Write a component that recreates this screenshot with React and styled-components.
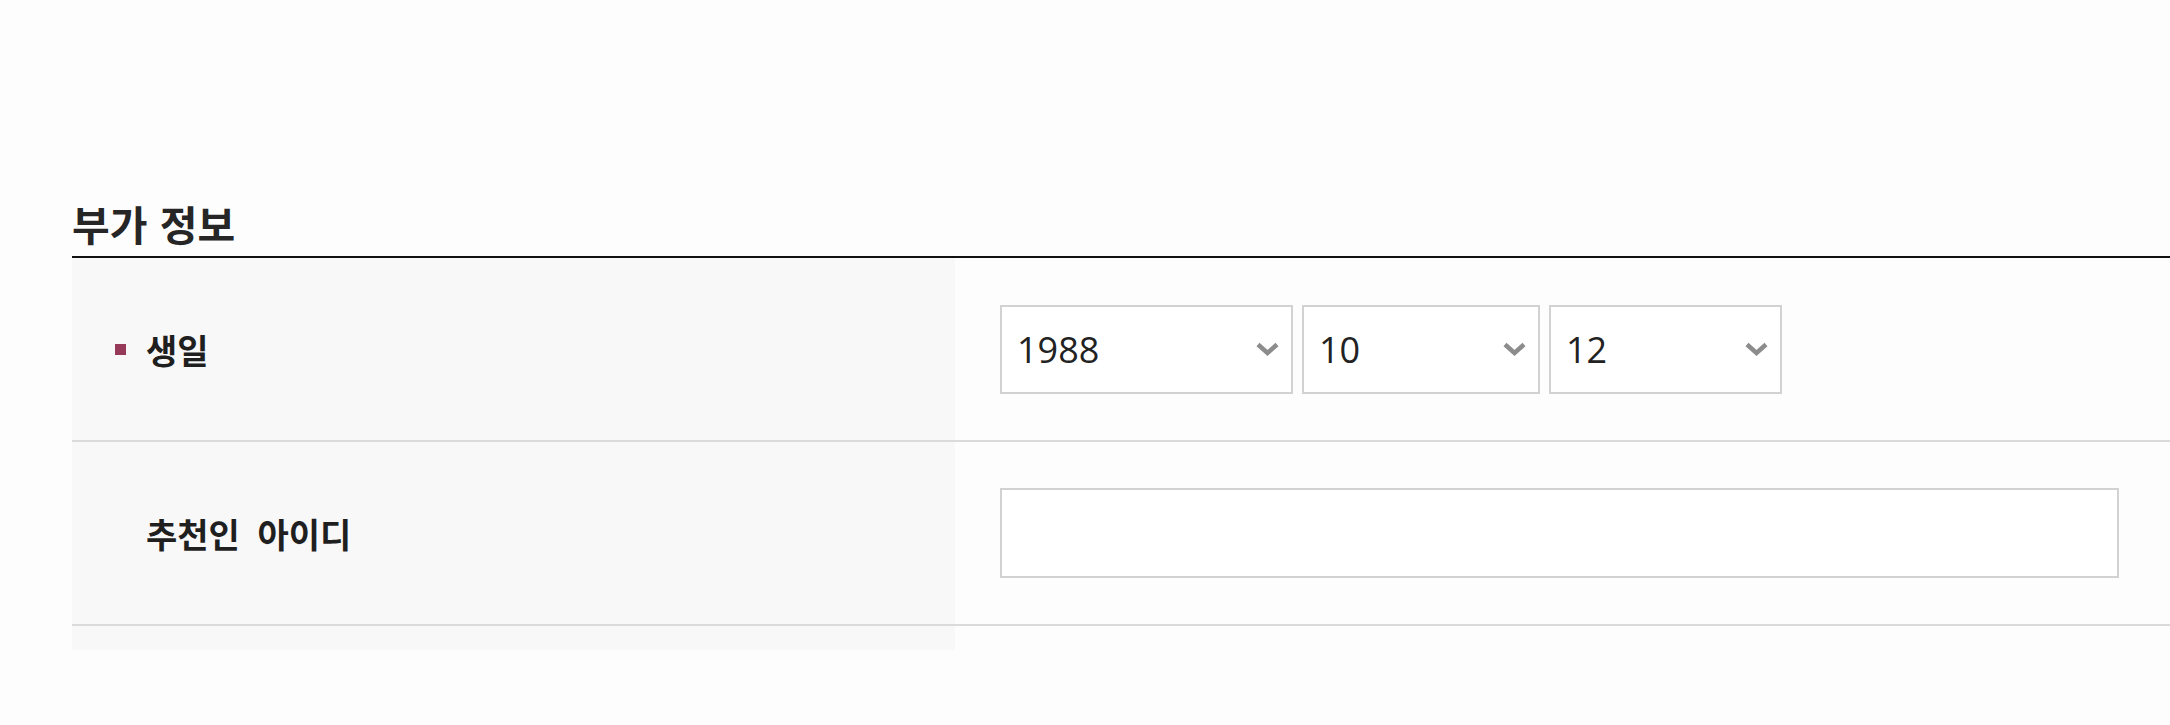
import React from 'react'
import styled, { createGlobalStyle } from 'styled-components'

const GlobalStyle = createGlobalStyle`
  html, body {
    margin: 0;
    padding: 0;
    background: #fdfdfd;
  }
  body {
    font-family: "Noto Sans CJK KR", "Noto Sans", sans-serif;
    color: #222;
  }
`;

const YEARS = ['1988'];
const MONTHS = ['10'];
const DAYS = ['12'];

const Section = styled.section`
  padding: 199px 0 0 72px;
`;
const Title = styled.h3`
  margin: 0;
  padding-bottom: 8px;
  font-size: 41px;
  line-height: 49px;
  font-weight: 700;
  word-spacing: 3px;
  color: #262626;
  border-bottom: 2px solid #111;
`;
const Table = styled.div`
  display: flex;
  flex-direction: column;
`;
const Row = styled.div`
  display: grid;
  grid-template-columns: 883px 1fr;
  min-height: 182px;
  border-bottom: 2px solid #dadada;
`;
const Filler = styled.div`
  display: grid;
  grid-template-columns: 883px 1fr;
  height: 24px;
`;
const LabelCell = styled.div`
  display: flex;
  align-items: center;
  background: #f8f8f8;
  padding-left: 43px;
`;
const Bullet = styled.span`
  width: 11px;
  height: 11px;
  margin-right: 20px;
  background: ${p => (p.$on ? '#973a5a' : 'transparent')};
`;
const Label = styled.span`
  font-size: 34px;
  font-weight: 700;
  word-spacing: 10px;
  color: #1f1f1f;
`;
const ValueCell = styled.div`
  display: flex;
  align-items: center;
  gap: 9px;
  padding-left: 45px;
`;
const SelectWrap = styled.div`
  position: relative;
  width: ${p => p.$w}px;
  height: 89px;
`;
const Select = styled.select`
  appearance: none;
  -webkit-appearance: none;
  width: 100%;
  height: 100%;
  box-sizing: border-box;
  border: 2px solid #d2d2d2;
  border-radius: 0;
  background: #fff;
  padding: 0 50px 0 15px;
  font-family: "Open Sans", "Noto Sans", sans-serif;
  font-size: 36px;
  color: #222;
  outline: none;
`;
const Chevron = styled.svg`
  position: absolute;
  right: 13px;
  top: 50%;
  transform: translateY(-50%);
  pointer-events: none;
`;
const TextInput = styled.input`
  width: 1119px;
  height: 90px;
  box-sizing: border-box;
  border: 2px solid #d2d2d2;
  background: #fff;
  font-size: 34px;
  outline: none;
`;

function DateSelect({ width, options }) {
  return (
    <SelectWrap $w={width}>
      <Select defaultValue={options[0]}>
        {options.map(o => <option key={o} value={o}>{o}</option>)}
      </Select>
      <Chevron width="25" height="15" viewBox="0 0 25 15">
        <polyline points="3,3 12.5,11.5 22,3" fill="none" stroke="#8c8c8c" strokeWidth="4.5" />
      </Chevron>
    </SelectWrap>
  );
}

export default function App() {
  return (
    <>
      <GlobalStyle />
      <Section>
        <Title>부가 정보</Title>
        <Table>
          <Row>
            <LabelCell>
              <Bullet $on />
              <Label>생일</Label>
            </LabelCell>
            <ValueCell>
              <DateSelect width={293} options={YEARS} />
              <DateSelect width={238} options={MONTHS} />
              <DateSelect width={233} options={DAYS} />
            </ValueCell>
          </Row>
          <Row>
            <LabelCell>
              <Bullet />
              <Label>추천인 아이디</Label>
            </LabelCell>
            <ValueCell>
              <TextInput type="text" />
            </ValueCell>
          </Row>
          <Filler>
            <LabelCell />
          </Filler>
        </Table>
      </Section>
    </>
  );
}
